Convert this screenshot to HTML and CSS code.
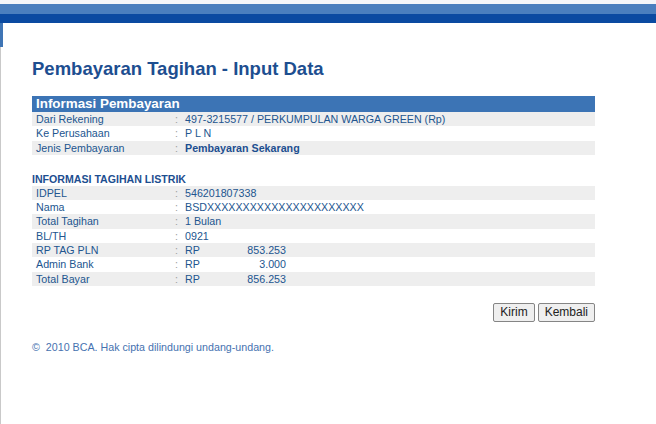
FILE: index.html
```html
<!DOCTYPE html>
<html lang="id">
<head>
    <meta charset="UTF-8">
    <title>Pembayaran Tagihan - Input Data</title>
    <link rel="stylesheet" href="styles.css">
</head>
<body>

    <!-- Top bar -->
    <div class="topbar">
        <div class="topbar-light"></div>
        <div class="topbar-dark"></div>
    </div>

    <div class="page">
        <h1 class="page-title">Pembayaran Tagihan - Input Data</h1>

        <!-- Informasi Pembayaran -->
        <div class="info-table">
            <h3 class="info-head">Informasi Pembayaran</h3>
            <div class="info-row">
                <span class="label">Dari Rekening</span>
                <span class="colon">:</span>
                <span class="value">497-3215577 / PERKUMPULAN WARGA GREEN (Rp)</span>
            </div>
            <div class="info-row">
                <span class="label">Ke Perusahaan</span>
                <span class="colon">:</span>
                <span class="value">P L N</span>
            </div>
            <div class="info-row">
                <span class="label">Jenis Pembayaran</span>
                <span class="colon">:</span>
                <span class="value bold">Pembayaran Sekarang</span>
            </div>
        </div>

        <!-- Informasi Tagihan Listrik -->
        <div class="section-title">INFORMASI TAGIHAN LISTRIK</div>
        <div class="info-table">
            <div class="info-row">
                <span class="label">IDPEL</span>
                <span class="colon">:</span>
                <span class="value">546201807338</span>
            </div>
            <div class="info-row">
                <span class="label">Nama</span>
                <span class="colon">:</span>
                <span class="value">BSDXXXXXXXXXXXXXXXXXXXXXX</span>
            </div>
            <div class="info-row">
                <span class="label">Total Tagihan</span>
                <span class="colon">:</span>
                <span class="value">1 Bulan</span>
            </div>
            <div class="info-row">
                <span class="label">BL/TH</span>
                <span class="colon">:</span>
                <span class="value">0921</span>
            </div>
            <div class="info-row">
                <span class="label">RP TAG PLN</span>
                <span class="colon">:</span>
                <span class="value"><span class="currency">RP</span><span class="amount">853.253</span></span>
            </div>
            <div class="info-row">
                <span class="label">Admin Bank</span>
                <span class="colon">:</span>
                <span class="value"><span class="currency">RP</span><span class="amount">3.000</span></span>
            </div>
            <div class="info-row">
                <span class="label">Total Bayar</span>
                <span class="colon">:</span>
                <span class="value"><span class="currency">RP</span><span class="amount">856.253</span></span>
            </div>
        </div>

        <div class="actions">
            <button type="button">Kirim</button>
            <button type="button">Kembali</button>
        </div>

        <footer class="copyright">&copy;&nbsp; 2010 BCA. Hak cipta dilindungi undang-undang.</footer>
    </div>

</body>
</html>
```

FILE: styles.css
```css
body {
    margin: 0;
    font-family: "Liberation Sans", Arial, sans-serif;
    background-color: #fff;
    color: #22558f;
}
.topbar {
    padding-top: 4px;
    background-color: #f4f6f9;
}
.topbar-light {
    height: 10px;
    background-color: #4a7fbe;
}
.topbar-dark {
    height: 9px;
    background-color: #0a4aa1;
}
.page {
    min-height: 401px;
    padding: 35px 0 0 32px;
    box-sizing: border-box;
    background:
        linear-gradient(#3f75b5, #3f75b5) no-repeat 0 0 / 3px 24px,
        linear-gradient(#c9c9c9, #c9c9c9) no-repeat 0 0 / 1px 100%;
}
.page-title {
    margin: 0 0 16px;
    font-size: 18.5px;
    line-height: 22px;
    font-weight: bold;
    color: #1d4e90;
}
.info-table {
    width: 563px;
    font-size: 10.7px;
}
.info-head {
    margin: 0;
    height: 16px;
    line-height: 16px;
    padding-left: 4px;
    background-color: #3c74b5;
    color: #fff;
    font-size: 13.4px;
    font-weight: bold;
}
.info-row {
    display: flex;
    height: 14.3px;
    line-height: 14.3px;
}
.info-row:nth-of-type(odd) {
    background-color: #eeeeee;
}
.label {
    width: 139px;
    padding-left: 4px;
}
.colon {
    width: 10px;
    color: #a0a0a0;
}
.value.bold {
    font-weight: bold;
    color: #1d4e90;
}
.currency {
    display: inline-block;
    width: 30px;
}
.amount {
    display: inline-block;
    width: 71px;
    text-align: right;
}
.section-title {
    margin-top: 17px;
    font-size: 10.6px;
    line-height: 14px;
    font-weight: bold;
    color: #1d4e90;
}
.actions {
    width: 563px;
    margin-top: 17px;
    display: flex;
    justify-content: flex-end;
    gap: 3px;
}
.actions button {
    height: 19px;
    padding: 0 6px;
    font-family: "Liberation Sans", Arial, sans-serif;
    font-size: 12px;
    color: #222;
    background-color: #efefef;
    border: 1px solid #858585;
    border-radius: 2px;
}
.copyright {
    margin-top: 19px;
    font-size: 10.7px;
    color: #4672b0;
}
```
